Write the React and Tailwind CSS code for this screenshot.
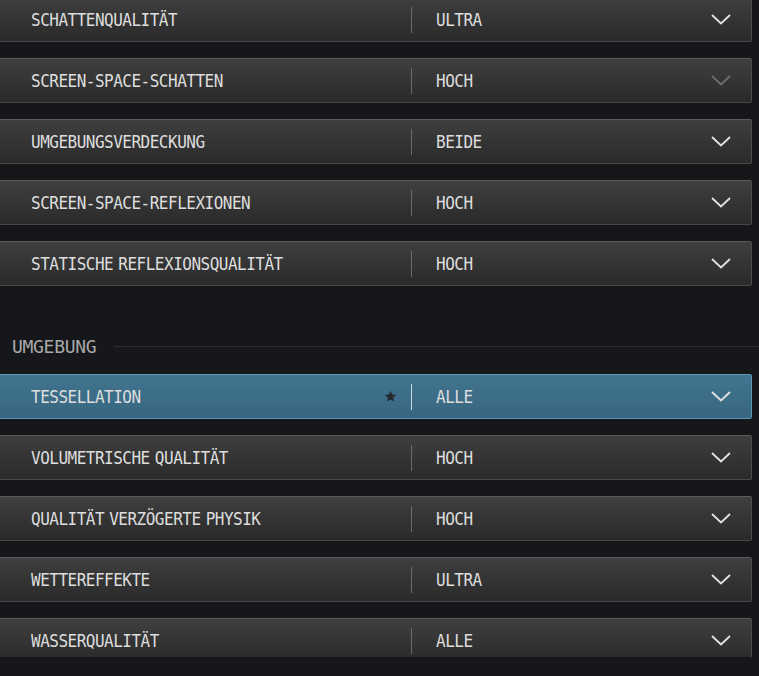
const mono = { fontFamily: '"DejaVu Sans Mono", "Liberation Mono", monospace' };

const shadowRows = [
  { label: "SCHATTENQUALITÄT", value: "ULTRA" },
  { label: "SCREEN-SPACE-SCHATTEN", value: "HOCH", dim: true },
  { label: "UMGEBUNGSVERDECKUNG", value: "BEIDE" },
  { label: "SCREEN-SPACE-REFLEXIONEN", value: "HOCH" },
  { label: "STATISCHE REFLEXIONSQUALITÄT", value: "HOCH" },
];

const envRows = [
  { label: "TESSELLATION", value: "ALLE", active: true },
  { label: "VOLUMETRISCHE QUALITÄT", value: "HOCH" },
  { label: "QUALITÄT VERZÖGERTE PHYSIK", value: "HOCH" },
  { label: "WETTEREFFEKTE", value: "ULTRA" },
  { label: "WASSERQUALITÄT", value: "ALLE" },
];

function Chevron({ dim }) {
  return (
    <svg width="20" height="11" viewBox="0 0 20 11" className={dim ? "text-[#6f6f6f]" : "text-[#e2e2e2]"}>
      <path d="M1 1 L10 9.5 L19 1" fill="none" stroke="currentColor" strokeWidth="1.8" />
    </svg>
  );
}

function Star() {
  return (
    <svg width="13" height="13" viewBox="0 0 24 24" className="text-[#262a2e]">
      <path
        d="M12 1.5l3.1 7 7.4.6-5.6 4.9 1.7 7.4L12 17.5l-6.6 3.9 1.7-7.4L1.5 9.1l7.4-.6z"
        fill="currentColor"
      />
    </svg>
  );
}

function Row({ label, value, dim, active }) {
  const box = active
    ? "border-[#5b98b6] bg-gradient-to-b from-[#41758f] to-[#386580]"
    : "border-t-[#5a5a5a] border-x-[#4d4d4d] border-b-[#474747] bg-gradient-to-b from-[#3f3f3f] to-[#2a2a2a]";
  const text =
    "inline-block origin-center scale-y-[1.12] pt-[1px] text-[16px] tracking-[-0.5px] [word-spacing:-4px] text-[#dedede]";
  return (
    <div className={`-ml-[6px] flex h-[45px] w-[758px] shrink-0 items-center rounded-[2px] border ${box}`}>
      <div className="flex w-[416px] items-center pl-[36px] pr-[14px]">
        <div className="flex-1">
          <span className={text} style={mono}>
            {label}
          </span>
        </div>
        {active && <Star />}
      </div>
      <div className={`h-[26px] w-px ${active ? "bg-[#c9d6dd]" : "bg-[#6a6a6a]"}`} />
      <div className="flex-1 pl-[24px]">
        <span className={text} style={mono}>
          {value}
        </span>
      </div>
      <div className="mr-[20px] flex items-center">
        <Chevron dim={dim} />
      </div>
    </div>
  );
}

export default function App() {
  return (
    <div className="h-[676px] w-[759px] overflow-hidden bg-[#16171a]">
      <div className="h-[657px] overflow-hidden">
        <div className="-mt-[3px] flex flex-col gap-[16px]">
          {shadowRows.map((r, i) => (
            <Row key={i} {...r} />
          ))}
        </div>

        <div className="mt-[48px] mb-[16px] flex h-[24px] items-center gap-[18px] pl-[12px]">
          <span className="pt-[1px] text-[18px] tracking-[-0.3px] text-[#a9a9a9]" style={mono}>
            UMGEBUNG
          </span>
          <div className="h-px flex-1 bg-[#2c2d30]" />
        </div>

        <div className="flex flex-col gap-[16px]">
          {envRows.map((r, i) => (
            <Row key={i} {...r} />
          ))}
        </div>
      </div>
    </div>
  );
}
